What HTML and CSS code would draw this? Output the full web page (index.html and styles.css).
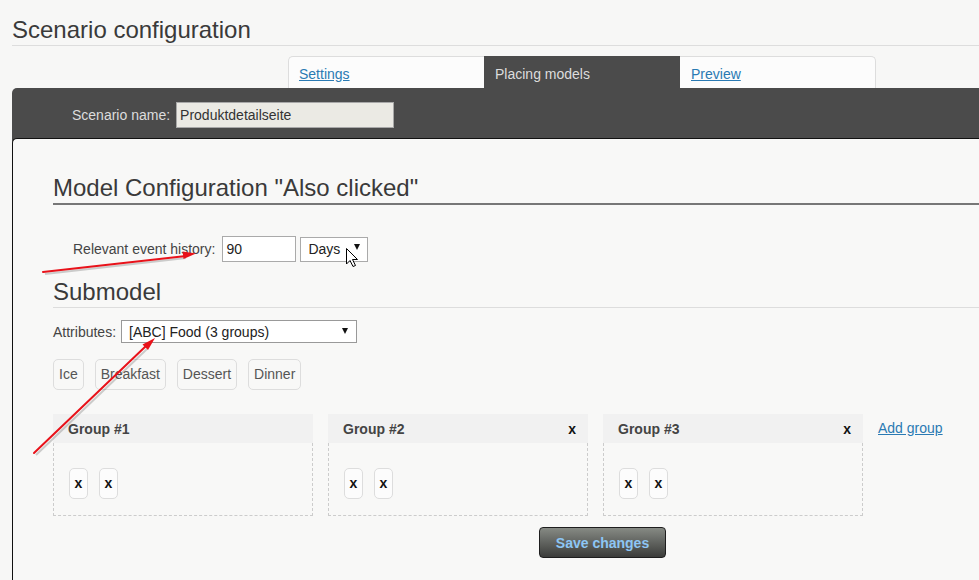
FILE: index.html
```html
<!DOCTYPE html>
<html>
<head>
<meta charset="utf-8">
<title>Scenario configuration</title>
<link rel="stylesheet" href="styles.css">
</head>
<body>
<div class="page">
  <h1 class="title">Scenario configuration</h1>
  <div class="tabs">
    <div class="tab tab-first"><a href="#">Settings</a></div>
    <div class="tab tab-active">Placing models</div>
    <div class="tab tab-last"><a href="#">Preview</a></div>
  </div>
  <div class="panel">
    <div class="panel-head">
      <label class="name-label">Scenario name:</label>
      <input class="name-input" type="text" value="Produktdetailseite">
    </div>
    <div class="content">
      <h2 class="section-title strong">Model Configuration "Also clicked"</h2>
      <div class="history-row">
        <span class="field-label">Relevant event history:</span>
        <input class="num-input" type="text" value="90">
        <div class="select days"><span>Days</span><span class="caret"></span></div>
      </div>
      <h2 class="section-title light">Submodel</h2>
      <div class="attr-row">
        <span class="field-label">Attributes:</span>
        <div class="select attr"><span>[ABC] Food (3 groups)</span><span class="caret"></span></div>
      </div>
      <div class="chips">
        <span class="chip">Ice</span>
        <span class="chip">Breakfast</span>
        <span class="chip">Dessert</span>
        <span class="chip">Dinner</span>
      </div>
      <div class="groups">
        <div class="group">
          <div class="group-head"><span>Group #1</span></div>
          <div class="group-body"><span class="x-chip">x</span><span class="x-chip">x</span></div>
        </div>
        <div class="group">
          <div class="group-head"><span>Group #2</span><span class="remove">x</span></div>
          <div class="group-body"><span class="x-chip">x</span><span class="x-chip">x</span></div>
        </div>
        <div class="group">
          <div class="group-head"><span>Group #3</span><span class="remove">x</span></div>
          <div class="group-body"><span class="x-chip">x</span><span class="x-chip">x</span></div>
        </div>
        <a class="add-group" href="#">Add group</a>
      </div>
      <div class="actions">
        <button class="save" type="button">Save changes</button>
      </div>
    </div>
  </div>
</div>
<svg class="overlay" width="979" height="580" viewBox="0 0 979 580">
  <g stroke="#000" stroke-opacity="0.18" stroke-width="2" fill="none">
    <line x1="45" y1="274" x2="186" y2="258"/>
    <line x1="36" y1="455" x2="147" y2="349"/>
  </g>
  <g stroke="#e8121a" stroke-width="2" fill="none" stroke-linecap="round">
    <line x1="43" y1="272" x2="186" y2="256"/>
    <line x1="34" y1="453" x2="147" y2="345"/>
  </g>
  <g fill="#e8121a">
    <polygon points="196,253.5 183.5,259 182.7,251.6"/>
    <polygon points="155,338 148,350 142.5,344.5"/>
  </g>
  <path d="M346.5 248.5 L346.5 264 L350 260.5 L353 266.5 L355.5 265.5 L352.5 259.5 L357.5 259.5 Z" fill="#fff" stroke="#000" stroke-width="1" stroke-linejoin="round"/>
</svg>
</body>
</html>
```
FILE: styles.css
```css
* {
  box-sizing: border-box;
}

html,
body {
  margin: 0;
}

body {
  position: relative;
  width: 979px;
  height: 580px;
  overflow: hidden;
  background: #f7f7f6;
  font-family: "Liberation Sans", Arial, sans-serif;
  color: #333;
}

.page {
  padding-left: 12px;
}

.title {
  margin: 0;
  padding-top: 15px;
  font-size: 24px;
  font-weight: normal;
  line-height: 30px;
  color: #3a3a3a;
  border-bottom: 1px solid #ddd;
}

.tabs {
  display: flex;
  margin: 10px 0 0 276px;
  height: 32px;
}

.tab {
  width: 196px;
  height: 32px;
  padding: 9px 0 0 11px;
  font-size: 14px;
  line-height: 16px;
  background: #fcfcfc;
  border-top: 1px solid #ddd;
}

.tab a {
  color: #2a7ab3;
}

.tab-first {
  border-left: 1px solid #ddd;
  border-top-left-radius: 5px;
  padding-left: 10px;
}

.tab-last {
  border-right: 1px solid #ddd;
  border-top-right-radius: 5px;
}

.tab-active {
  background: #4b4b4b;
  border-top-color: #4b4b4b;
  color: #ddd;
  padding-top: 9px;
}

.panel {
  background: #4b4b4b;
  border-top-left-radius: 5px;
}

.panel-head {
  display: flex;
  align-items: center;
  height: 50px;
  padding: 4px 0 0 60px;
}

.name-label {
  color: #ddd;
  font-size: 14px;
}

.name-input {
  margin-left: 6px;
  width: 218px;
  height: 26px;
  padding: 0 3px;
  background: #ebeae4;
  border: 1px solid #a8a8a8;
  font: 14px "Liberation Sans", Arial, sans-serif;
  color: #333;
}

.content {
  height: 442px;
  padding: 34px 0 0 40px;
  background: #f8f8f7;
  border-top: 1px solid #111;
  border-left: 1px solid #111;
  border-top-left-radius: 5px;
}

.section-title {
  margin: 0;
  font-size: 24px;
  font-weight: normal;
  line-height: 30px;
  color: #3a3a3a;
}

.strong {
  border-bottom: 2px solid #777;
}

.light {
  margin-top: 15px;
  border-bottom: 1px solid #ddd;
}

.history-row {
  display: flex;
  align-items: center;
  height: 26px;
  margin-top: 31px;
  padding-left: 20px;
}

.field-label {
  font-size: 14px;
  color: #444;
}

.num-input {
  margin-left: 7px;
  width: 74px;
  height: 26px;
  padding: 0 3px;
  background: #fff;
  border: 1px solid #aaa;
  font: 14px "Liberation Sans", Arial, sans-serif;
  color: #222;
}

.select {
  display: flex;
  align-items: center;
  justify-content: space-between;
  background: #fff;
  font-size: 14px;
  color: #222;
}

.days {
  margin-left: 4px;
  width: 68px;
  height: 25px;
  padding: 0 7px 0 7px;
  border: 1px solid #aaa;
}

.caret {
  width: 0;
  height: 0;
  border-left: 3.5px solid transparent;
  border-right: 3.5px solid transparent;
  border-top: 6px solid #111;
  margin-top: -5px;
}

.attr-row {
  display: flex;
  align-items: center;
  margin-top: 12px;
}

.attr {
  margin-left: 5px;
  width: 236px;
  height: 23px;
  padding: 0 8px 0 7px;
  border: 1px solid #999;
}

.attr .caret {
  margin-top: -1px;
}

.chips {
  display: flex;
  gap: 11px;
  margin-top: 16px;
}

.chip {
  height: 31px;
  padding: 0 5px;
  line-height: 29px;
  font-size: 14px;
  color: #555;
  border: 1px solid #ddd;
  border-radius: 5px;
}

.groups {
  display: flex;
  align-items: flex-start;
  gap: 15px;
  margin-top: 24px;
}

.group {
  width: 260px;
}

.group-head {
  display: flex;
  align-items: center;
  justify-content: space-between;
  height: 29px;
  padding: 0 12px 0 15px;
  background: #f1f1f1;
  font-size: 14px;
  font-weight: bold;
  color: #444;
}

.remove {
  color: #111;
}

.group-body {
  display: flex;
  gap: 11px;
  height: 73px;
  padding: 25px 0 0 15px;
  border: 1px dashed #ccc;
  border-top: none;
}

.x-chip {
  width: 19px;
  height: 31px;
  line-height: 29px;
  text-align: center;
  font-size: 14px;
  font-weight: bold;
  color: #111;
  background: #fcfcfc;
  border: 1px solid #ddd;
  border-radius: 5px;
}

.add-group {
  margin-top: 6px;
  font-size: 14px;
  color: #2a7ab3;
}

.actions {
  margin-top: 11px;
  padding-left: 486px;
}

.save {
  width: 127px;
  height: 31px;
  padding: 0;
  border: 1px solid #1e1e1e;
  border-radius: 4px;
  background: linear-gradient(#868a84, #3b3c3a);
  color: #8dc6f5;
  font: bold 14px "Liberation Sans", Arial, sans-serif;
}

.overlay {
  position: absolute;
  top: 0;
  left: 0;
  pointer-events: none;
}
```
